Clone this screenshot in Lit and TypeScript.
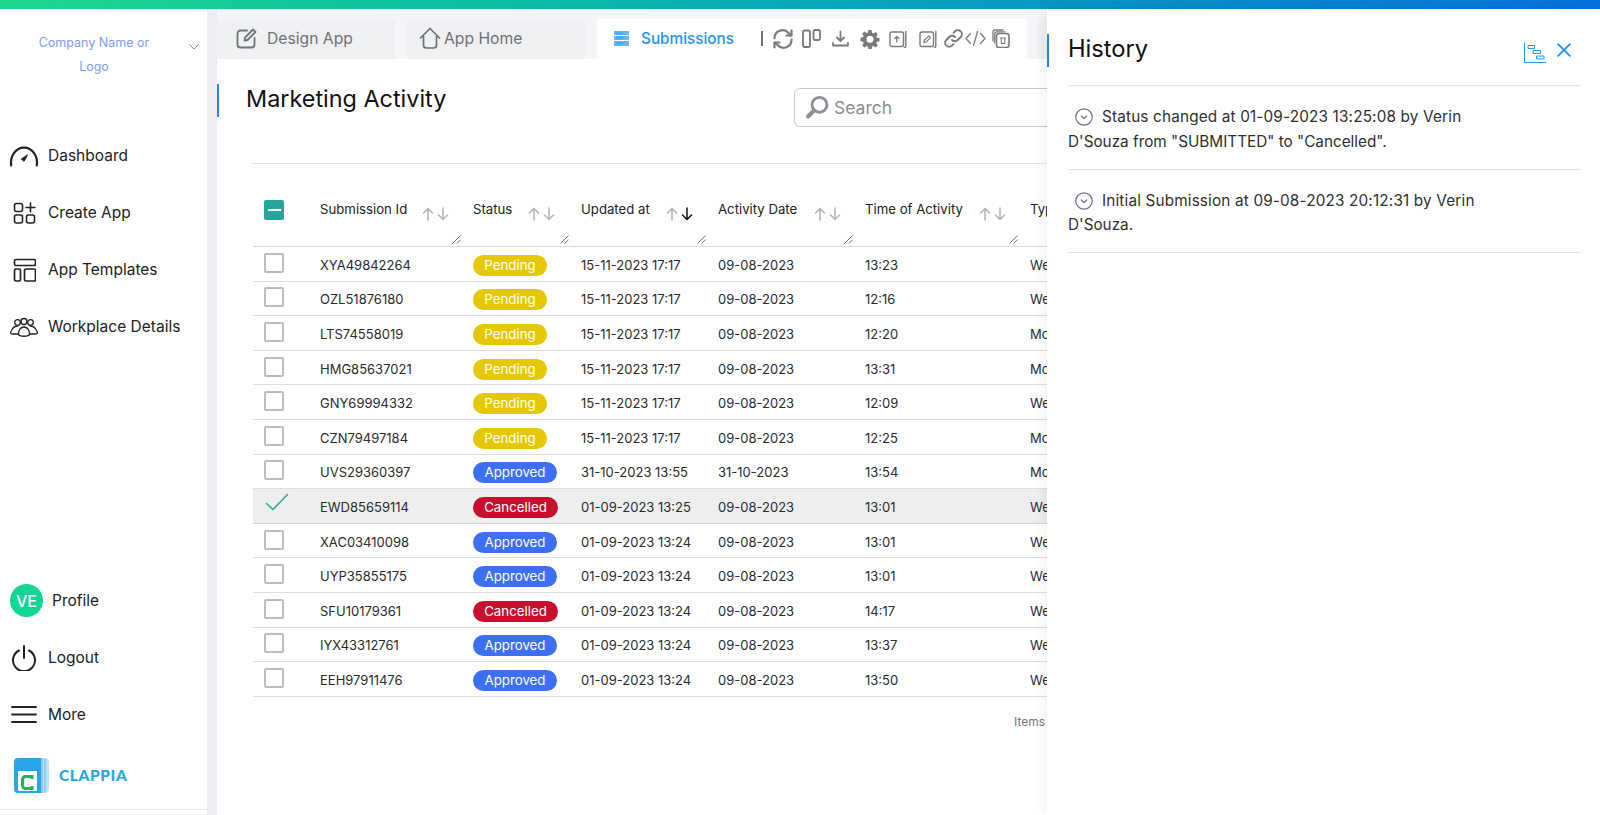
import { LitElement, html, css, svg } from "lit";
import { customElement } from "lit/decorators.js";

type Row = [string, string, string, string, string, string];
const P = "15-11-2023 17:17", D = "09-08-2023", C = "01-09-2023 13:24";
const rows: Row[] = [
  ["XYA49842264", "Pending", P, D, "13:23", "Website"],
  ["OZL51876180", "Pending", P, D, "12:16", "Website"],
  ["LTS74558019", "Pending", P, D, "12:20", "Mobile"],
  ["HMG85637021", "Pending", P, D, "13:31", "Mobile"],
  ["GNY69994332", "Pending", P, D, "12:09", "Website"],
  ["CZN79497184", "Pending", P, D, "12:25", "Mobile"],
  ["UVS29360397", "Approved", "31-10-2023 13:55", "31-10-2023", "13:54", "Mobile"],
  ["EWD85659114", "Cancelled", "01-09-2023 13:25", D, "13:01", "Website"],
  ["XAC03410098", "Approved", C, D, "13:01", "Website"],
  ["UYP35855175", "Approved", C, D, "13:01", "Website"],
  ["SFU10179361", "Cancelled", C, D, "14:17", "Website"],
  ["IYX43312761", "Approved", C, D, "13:37", "Website"],
  ["EEH97911476", "Approved", C, D, "13:50", "Website"],
];

const heads: [string, boolean, number][] = [
  ["Submission Id", false, 24],
  ["Status", false, 26],
  ["Updated at", true, 25],
  ["Activity Date", false, 24],
  ["Time of Activity", false, 24],
];

const ic = (w: number, h: number, body: unknown, cls = "") =>
  html`<svg class=${cls} width=${w} height=${h} viewBox="0 0 ${w} ${h}" fill="none" stroke="currentColor" stroke-linecap="round" stroke-linejoin="round">${body}</svg>`;

const icons = {
  gauge: ic(30, 24, svg`<path d="M2.200 21.500C.8 11.500 7 3.600 15 3.600s14.200 7.900 12.800 17.900" stroke-width="2.200"/><path d="M12.500 15 18.500 10.800 15.200 17Z" fill="currentColor" stroke-width="1"/>`),
  create: ic(24, 24, svg`<g stroke-width="1.600"><rect x="2.500" y="2.500" width="8" height="8" rx="2"/><rect x="2.500" y="14" width="8" height="8" rx="2"/><rect x="14.500" y="14" width="8" height="8" rx="2"/><path d="M18.500 2v9M14 6.500h9"/></g>`),
  templates: ic(24, 24, svg`<g stroke-width="1.700"><rect x="2.500" y="1.500" width="21" height="6" rx="1.500"/><rect x="2.500" y="11" width="6" height="12" rx="1.500"/><rect x="12.500" y="11" width="11" height="12" rx="1.500"/></g>`),
  people: ic(30, 24, svg`<g stroke-width="1.300"><circle cx="8.500" cy="7.500" r="2.800"/><circle cx="15" cy="6.500" r="3"/><circle cx="21.500" cy="7.500" r="2.800"/><path d="M9.500 19c-.5 3 11.500 3 11 0 0-3.500-2-7-5.500-7s-5.500 3.500-5.500 7Z"/><path d="M9.500 19H3.500c-2.500 0-2.300-1.700-.8-4 1.300-2.500 3.300-4 6-4M20.500 19h6c2.500 0 2.300-1.700.8-4-1.300-2.500-3.300-4-6-4"/></g>`),
  power: ic(26, 26, svg`<g stroke-width="2"><path d="M8 5.500a11 11 0 1 0 10 0"/><path d="M13 1v12"/></g>`),
  menu: ic(26, 20, svg`<path d="M1 2h24M1 9.500h24M1 17h24" stroke-width="1.800"/>`),
  edit: ic(22, 22, svg`<g stroke-width="1.800"><path d="M11 3.500H4.500a3 3 0 0 0-3 3v11a3 3 0 0 0 3 3h11a3 3 0 0 0 3-3V11"/><path d="M8.500 13.500 9 10.500 17 2.500 19.500 5 11.500 13Z"/></g>`),
  home: ic(22, 22, svg`<g stroke-width="1.700"><path d="M1.500 11 11 1.500 20.500 11"/><path d="M4.500 9.500V18a3 3 0 0 0 3 3h7a3 3 0 0 0 3-3V9.500"/></g>`),
  refresh: ic(20, 20, svg`<g stroke-width="2.200"><path d="M1.500 9.500A8 8 0 0 1 15.500 4L18 6.500"/><path d="M18.500 1.500v5h-5"/><path d="M18.500 10.500A8 8 0 0 1 4.500 16L2 13.500"/><path d="M1.500 18.500v-5h5"/></g>`),
  columns: ic(19, 19, svg`<g stroke-width="1.800"><rect x="1" y="1.500" width="7" height="16.500" rx="1.500"/><rect x="11.500" y="1" width="6.500" height="10" rx="1.500"/></g>`),
  download: ic(17, 17, svg`<g stroke-width="1.800"><path d="M8.500 1.500v9M5 7.500l3.500 3.500L12 7.500"/><path d="M1 13v2.500h15V13"/></g>`),
  gear: html`<svg width="20" height="20" viewBox="0 0 24 24" fill="currentColor"><path fill-rule="evenodd" d="M13.900 1.500l.5 3.100 1.700.7 2.600-1.800 2.700 2.700-1.800 2.600.7 1.700 3.100.5v3.800l-3.100.5-.7 1.700 1.800 2.600-2.700 2.700-2.600-1.800-1.700.7-.5 3.100h-3.800l-.5-3.100-1.700-.7-2.600 1.800-2.700-2.700 1.800-2.600-.7-1.700L.6 14.300v-3.800l3.100-.5.7-1.700-1.800-2.600 2.700-2.700 2.600 1.800 1.700-.7.5-3.100ZM12 8a4.200 4.200 0 1 0 0 8.400A4.200 4.200 0 0 0 12 8Z"/></svg>`,
  boxUp: ic(18, 18, svg`<g stroke-width="1.400"><rect x="1" y="2" width="13.500" height="14.500" rx="2"/><path d="M16.800 1.500v14.500a1.500 1.500 0 0 1-1.500 1.500" /><path d="M7.800 12V6.500M5.800 8.500l2-2 2 2" stroke-width="1.300"/></g>`),
  boxEdit: ic(18, 18, svg`<g stroke-width="1.400"><rect x="1" y="2" width="13.500" height="14.500" rx="2"/><path d="M16.800 1.500v14.500a1.500 1.500 0 0 1-1.500 1.500"/><path d="M4.800 12.500l.5-2.300 4.400-4.400 1.800 1.800-4.400 4.400Z" stroke-width="1.200"/></g>`),
  link: ic(19, 19, svg`<g stroke-width="1.900"><path d="M8 11a4 4 0 0 0 5.700 0l3-3a4 4 0 0 0-5.700-5.700L9.500 3.800"/><path d="M11 8a4 4 0 0 0-5.700 0l-3 3A4 4 0 0 0 8 16.700l1.500-1.500"/></g>`),
  code: ic(21, 17, svg`<g stroke-width="1.300"><path d="M5.500 3.500 1 8.500l4.500 5M15.500 3.500l4.500 5-4.500 5M12.500 1.500l-4 14"/></g>`),
  trash: ic(18, 19, svg`<g stroke-width="1.300"><path d="M1 12V3a2 2 0 0 1 2-2h8"/><path d="M2.800 14V4.800a2 2 0 0 1 2-2h8"/><rect x="4.500" y="4.500" width="12.500" height="14" rx="2.500" stroke-width="1.600"/><path d="M8.500 9h5M9.300 9v5.500h3.400V9" stroke-width="1.100"/></g>`),
  search: ic(25, 25, svg`<g stroke-width="2.800"><circle cx="14.500" cy="9.800" r="7.500"/><path d="M9 15.500 3 21.500" stroke-width="4"/></g>`),
  gantt: ic(22, 20, svg`<g stroke-width="1"><path d="M.5 .5v19h21"/><rect x="4.500" y="2.500" width="6" height="3"/><rect x="9.500" y="7.500" width="7" height="3"/><rect x="13" y="13" width="7" height="3"/></g>`),
  close: ic(14, 14, svg`<path d="M1.200 1.200 12.800 12.800M12.800 1.200 1.200 12.800" stroke-width="1.900"/>`),
  chev: ic(10, 6, svg`<path d="M.8.800 5 5 9.200.800" stroke-width="1"/>`),
  circleChev: ic(18, 18, svg`<circle cx="9" cy="9" r="8.200" stroke-width="1.200"/><path d="M6.300 8 9 10.500 11.700 8" stroke-width="1.200"/>`),
  check: ic(24, 18, svg`<path d="M1.500 10.500 8 16.500 22.500 1.500" stroke-width="1.500"/>`),
  up: ic(12, 14, svg`<path d="M6 13V1.500M1.500 6 6 1.500 10.500 6" stroke-width="1.500"/>`),
  down: ic(12, 14, svg`<path d="M6 1v11.500M1.500 8 6 12.500 10.500 8" stroke-width="1.500"/>`),
  grip: ic(9, 9, svg`<path d="M.8 8.200 8.200.800M5 8.200 8.200 5" stroke-width=".9"/>`),
  subs: html`<svg width="15" height="15" viewBox="0 0 15 15"><rect width="15" height="15" fill="#64b5f6"/><path d="M0 4.500h15M0 9.500h15" stroke="#fff" stroke-width="1"/><path d="M2 2.200h7M2 7h7M2 12h7" stroke="#2196f3" stroke-width=".8"/></svg>`,
  logo: html`<svg width="35" height="35" viewBox="0 0 35 35"><path d="M27 0h4a4 4 0 0 1 4 4v27a4 4 0 0 1-4 4h-4Z" fill="#bfe3fa"/><path d="M28 0v35M31 1v33" stroke="#5fb8ef" stroke-width="1"/><path d="M4 0h23v35H4a4 4 0 0 1-4-4V4a4 4 0 0 1 4-4Z" fill="#2ba5ea"/><rect x="4" y="13" width="19" height="20" rx="1" fill="#fff"/><path d="M18 21v-2.500h-6.500a3 3 0 0 0-3 3v6a3 3 0 0 0 3 3H18V28" fill="none" stroke="#17b85c" stroke-width="3"/></svg>`,
};

@customElement("app-root")
export class AppRoot extends LitElement {
  static styles = css`
    :host {
      display: block;
      position: relative;
      width: 1600px;
      height: 815px;
      overflow: hidden;
      background: #fff;
      font-family: Inter, "Liberation Sans", sans-serif;
      color: #1c1c1c;
    }
    .topbar { height: 9px; background: linear-gradient(90deg, #1fd68c 0%, #0bbfa5 30%, #08a8b8 50%, #0470dc 100%); }
    .layout { display: flex; height: 806px; }

    .sidebar { width: 207px; flex: none; display: flex; flex-direction: column; box-sizing: border-box; border-bottom: 1px solid #e9e9e9; height: 801px; }
    .brand { display: flex; height: 100px; padding-top: 22px; box-sizing: border-box; }
    .brand-name { width: 120px; margin: 0 34px; text-align: center; font-size: 12.500px; line-height: 23.500px; color: #7d9cf3; flex: none; }
    .brand-chev { color: #5a90e8; margin-top: 3px; margin-left: 1px; }
    .nav { display: flex; flex-direction: column; margin-top: 18px; gap: 0; flex: 1; }
    .nav-item { height: 57px; display: flex; align-items: center; font-size: 15.500px; color: #222; }
    .nav-icon { width: 48px; display: flex; justify-content: center; padding-right: 0; box-sizing: border-box; flex: none; }
    .nav-tail { margin-top: auto; }
    .avatar { width: 33px; height: 33px; border-radius: 50%; background: #12d694; color: #fff; font-size: 16px; font-weight: 500; display: flex; align-items: center; justify-content: center; margin: 0 9px 0 10px; flex: none; }
    .brand-logo { display: flex; align-items: center; height: 66px; box-sizing: border-box; padding: 0 0 2px 14px; gap: 10px; }
    .brand-logo span { font-family: Lato, "Open Sans", sans-serif; font-weight: 900; font-size: 15.500px; letter-spacing: .6px; color: #27a5ec; }

    .gutter { width: 10px; flex: none; background: #ebedf2; }
    .main { flex: 1; min-width: 0; display: flex; flex-direction: column; }

    .tabs { height: 50px; flex: none; display: flex; align-items: flex-end; background: #f4f5f8; gap: 12px; }
    .tab { width: 178px; height: 40px; padding-bottom: 2px; background: #eff0f2; display: flex; align-items: center; color: #6f7276; font-size: 15.700px; flex: none; box-sizing: border-box; }
    .tab.design { padding-left: 19px; gap: 9px; }
    .tab.home { padding-left: 12px; gap: 3px; }
    .tab.active { width: 430px; background: #fff; color: #2196f3; font-size: 15.300px; font-weight: 500; padding-left: 17px; gap: 12px; }
    .tab.next { margin-left: -1px; width: 60px; }
    .tools { display: flex; align-items: center; color: #7a7a7a; margin: 1px 0 0 15px; height: 20px; }
    .sep { width: 2px; height: 15px; background: #6f6f6f; margin-right: 10px; }
    .tools svg { flex: none; }
    .tools svg:nth-of-type(2) { margin-left: 9px; }
    .tools svg:nth-of-type(3) { margin-left: 11px; }
    .tools svg:nth-of-type(4) { margin-left: 11px; }
    .tools svg:nth-of-type(5) { margin-left: 9px; }
    .tools svg:nth-of-type(6) { margin-left: 12px; }
    .tools svg:nth-of-type(7) { margin-left: 7px; }
    .tools svg:nth-of-type(8) { margin-left: 2px; }
    .tools svg:nth-of-type(9) { margin-left: 6px; }

    .head { display: flex; height: 104px; flex: none; }
    .title { margin-top: 25px; height: 33px; border-left: 2px solid #2b83f0; padding-left: 27px; font-size: 23.400px; line-height: 30px; color: #111; width: 548px; flex: none; box-sizing: content-box; }
    .search { margin-top: 29px; height: 39px; width: 400px; flex: none; border: 1px solid #c8c8c8; border-radius: 6px; box-sizing: border-box; display: flex; align-items: center; padding-left: 10px; gap: 4px; color: #8a9095; font-size: 17.500px; }

    .table { margin-left: 36px; border-top: 1px solid #e3e3e3; width: 1200px; }
    .grid { display: grid; grid-template-columns: 67px 153px 108px 137px 147px 165px 1fr; }
    .thead { height: 83px; border-bottom: 1px solid #d9d9d9; box-sizing: border-box; }
    .th { display: flex; flex-direction: column; padding-top: 36px; box-sizing: border-box; }
    .th-top { display: flex; justify-content: space-between; font-size: 13.200px; font-weight: 400; color: #222; line-height: 18px; height: 18px; }
    .arrows { display: flex; gap: 3px; color: #b2b2b2; margin-top: 7px; }
    .arrows .on { color: #111; }
    .grip { color: #666; align-self: flex-end; margin-right: 12px; margin-top: 17px; display: flex; }
    .tr { height: 34.600px; border-bottom: 1px solid #dedede; box-sizing: border-box; align-items: center; font-size: 13px; color: #2b2b2b; }
    .tr > div:not(.cb) { padding-top: 2px; }
    .tr.sel { background: #eeeeee; border-bottom-color: #d5d5d5; }
    .cb { padding-left: 11px; display: flex; }
    .box { width: 20px; height: 20px; box-sizing: border-box; border: 2px solid #b7bfc4; border-radius: 2px; display: block; margin-top: -2px; }
    .box.minus { background: #26a69a; border: none; display: flex; align-items: center; justify-content: center; margin-top: 0; }
    .box.minus i { display: block; width: 13px; height: 2.500px; background: #fff; }
    .thead .cb { padding-top: 36px; }
    .tick { color: #26a69a; display: flex; margin: -7px 0 0 1px; }
    .pill { display: inline-block; height: 21px; line-height: 21px; border-radius: 11px; color: #fff; font-size: 13.300px; text-align: center; vertical-align: top; margin-top: 1px; }
    .Pending { background: #e5c800; width: 74px; }
    .Approved { background: #3d6ff5; width: 84px; }
    .Cancelled { background: #c8102e; width: 85px; }
    .foot { padding: 17px 0 0 761px; font-size: 12px; color: #777; white-space: nowrap; }

    .panel { position: absolute; left: 1047px; right: 0; top: 9px; bottom: 0; background: #fff; box-shadow: -4px 0 10px rgba(0,0,0,.05); box-sizing: border-box; padding: 0 19px 0 21px; }
    .bar { position: absolute; left: 0; top: 25px; height: 33px; width: 2px; background: #2b83f0; }
    .p-head { height: 77px; display: flex; align-items: flex-start; border-bottom: 1px solid #e2e2e2; box-sizing: border-box; }
    .p-title { font-size: 23.700px; line-height: 30px; margin-top: 25px; color: #111; flex: 1; }
    .p-actions { display: flex; color: #2196f3; margin: 34px 10px 0 0; gap: 11px; align-items: flex-start; }
    .entry { border-bottom: 1px solid #e2e2e2; height: 83.500px; box-sizing: border-box; padding-top: 19px; font-size: 15.300px; line-height: 24.500px; color: #2f2f2f; width: 100%; }
    .entry p { margin: 0; width: 420px; }
    .entry p::first-line { letter-spacing: .165px; }
    .entry svg { color: #6d7480; vertical-align: -4px; margin: 0 9px 0 7px; }
  `;

  render() {
    return html`
      <div class="topbar"></div>
      <div class="layout">
        <aside class="sidebar">
          <div class="brand">
            <div class="brand-name">Company Name or Logo</div>
            <span class="brand-chev">${icons.chev}</span>
          </div>
          <nav class="nav">
            <div class="nav-item"><span class="nav-icon">${icons.gauge}</span>Dashboard</div>
            <div class="nav-item"><span class="nav-icon">${icons.create}</span>Create App</div>
            <div class="nav-item"><span class="nav-icon">${icons.templates}</span>App Templates</div>
            <div class="nav-item"><span class="nav-icon">${icons.people}</span>Workplace Details</div>
            <div class="nav-item nav-tail"><span class="avatar">VE</span>Profile</div>
            <div class="nav-item"><span class="nav-icon">${icons.power}</span>Logout</div>
            <div class="nav-item"><span class="nav-icon">${icons.menu}</span>More</div>
          </nav>
          <div class="brand-logo">${icons.logo}<span>CLAPPIA</span></div>
        </aside>
        <div class="gutter"></div>
        <main class="main">
          <div class="tabs">
            <div class="tab design">${icons.edit}Design App</div>
            <div class="tab home">${icons.home}App Home</div>
            <div class="tab active">
              ${icons.subs}Submissions
              <div class="tools">
                <span class="sep"></span>
                ${icons.refresh}${icons.columns}${icons.download}${icons.gear}${icons.boxUp}${icons.boxEdit}${icons.link}${icons.code}${icons.trash}
              </div>
            </div>
            <div class="tab next"></div>
          </div>
          <div class="head">
            <div class="title">Marketing Activity</div>
            <div class="search">${icons.search}Search</div>
          </div>
          <div class="table">
            <div class="grid thead">
              <div class="cb"><span class="box minus"><i></i></span></div>
              ${heads.map(([h, on, pad]) => html`
                <div class="th">
                  <div class="th-top" style="padding-right:${pad}px"><span>${h}</span>
                    <span class="arrows"><span>${icons.up}</span><span class=${on ? "on" : ""}>${icons.down}</span></span>
                  </div>
                  <span class="grip">${icons.grip}</span>
                </div>`)}
              <div class="th"><div class="th-top"><span>Type</span></div></div>
            </div>
            ${rows.map((r) => html`
              <div class="grid tr ${r[0] === "EWD85659114" ? "sel" : ""}">
                <div class="cb">${r[0] === "EWD85659114" ? html`<span class="tick">${icons.check}</span>` : html`<span class="box"></span>`}</div>
                <div>${r[0]}</div>
                <div><span class="pill ${r[1]}">${r[1]}</span></div>
                <div>${r[2]}</div>
                <div>${r[3]}</div>
                <div>${r[4]}</div>
                <div>${r[5]}</div>
              </div>`)}
            <div class="foot">Items per page</div>
          </div>
        </main>
      </div>
      <section class="panel">
        <span class="bar"></span>
        <div class="p-head">
          <div class="p-title">History</div>
          <div class="p-actions">${icons.gantt}${icons.close}</div>
        </div>
        <div class="entry"><p>${icons.circleChev}Status changed at 01-09-2023 13:25:08 by Verin D'Souza from "SUBMITTED" to "Cancelled".</p></div>
        <div class="entry"><p>${icons.circleChev}Initial Submission at 09-08-2023 20:12:31 by Verin D'Souza.</p></div>
      </section>
    `;
  }
}
